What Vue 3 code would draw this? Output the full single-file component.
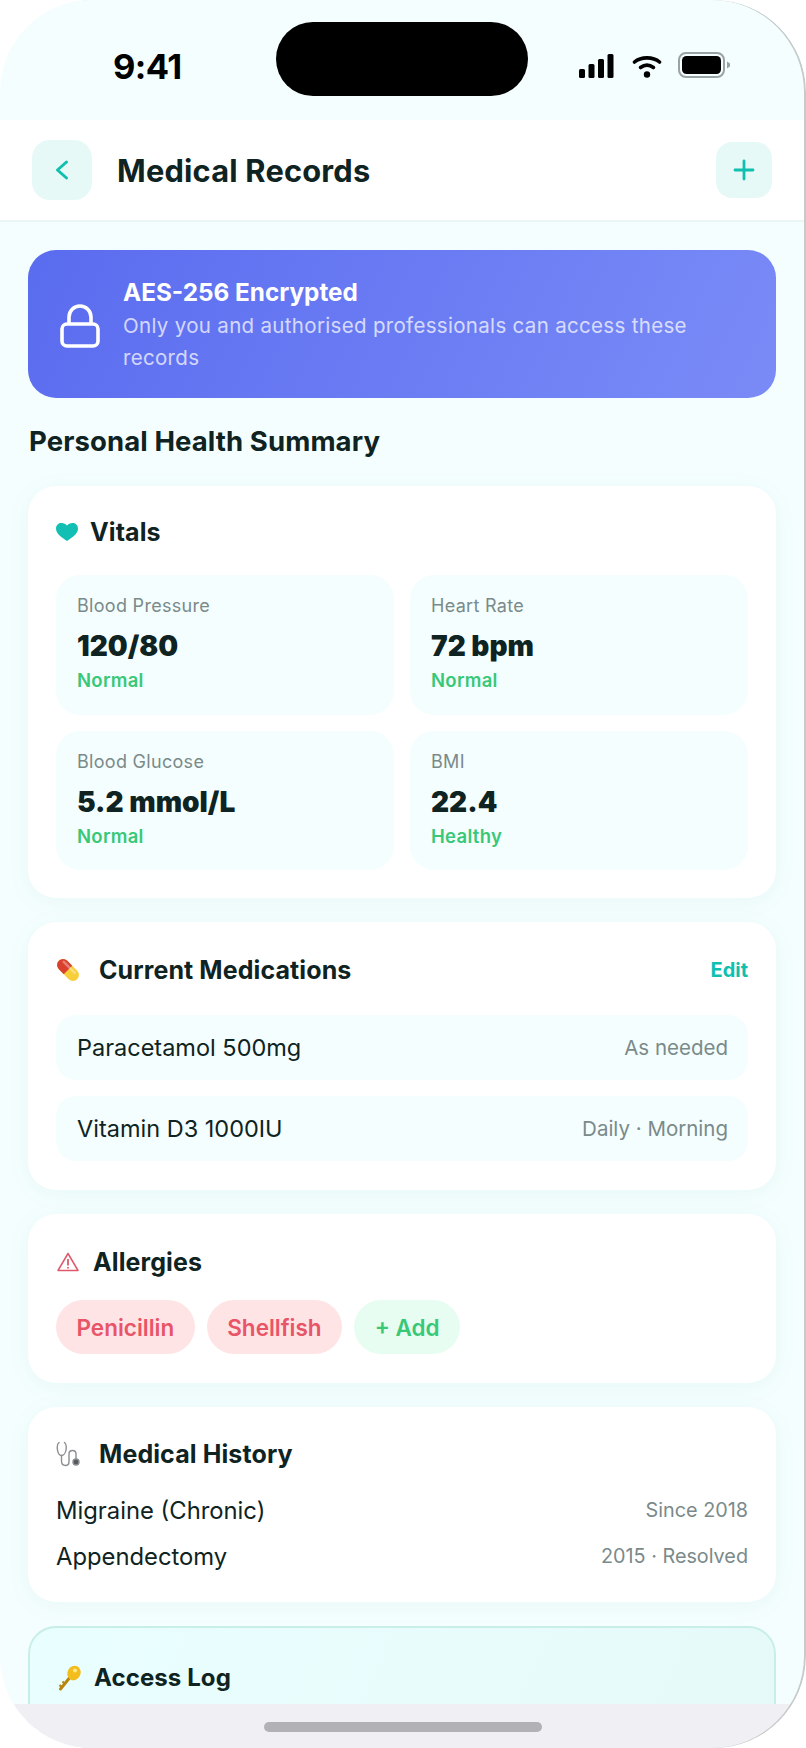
<script setup>
const vitals = [
  { label: 'Blood Pressure', value: '120/80', status: 'Normal' },
  { label: 'Heart Rate', value: '72 bpm', status: 'Normal' },
  { label: 'Blood Glucose', value: '5.2 mmol/L', status: 'Normal' },
  { label: 'BMI', value: '22.4', status: 'Healthy' },
]
const meds = [
  { name: 'Paracetamol 500mg', note: 'As needed' },
  { name: 'Vitamin D3 1000IU', note: 'Daily · Morning' },
]
const history = [
  { name: 'Migraine (Chronic)', note: 'Since 2018' },
  { name: 'Appendectomy', note: '2015 · Resolved' },
]
</script>

<template>
  <div class="phone">
    <div class="status">
      <span class="time">9:41</span>
      <div class="island"></div>
      <div class="status-icons">
        <svg class="signal" width="35" height="24" viewBox="0 0 35 24"><rect x="0" y="15" width="6" height="9" rx="1.5"/><rect x="9.500" y="10" width="6" height="14" rx="1.5"/><rect x="19" y="5" width="6" height="19" rx="1.5"/><rect x="28.500" y="0" width="6" height="24" rx="1.5"/></svg>
        <svg width="30" height="24" viewBox="0 0 30 24" fill="none" stroke="#000" stroke-width="3.600" stroke-linecap="round"><path d="M2.500 8C9 2.500 21 2.500 27.500 8"/><path d="M8.500 13.500c4-3 9-3 13 0"/><circle cx="15" cy="20.500" r="3.200" fill="#000" stroke="none"/></svg>
        <svg width="53" height="26" viewBox="0 0 53 26"><rect x="1" y="1" width="45" height="24" rx="7" fill="none" stroke="#9aa3a3" stroke-width="2"/><rect x="4" y="4" width="39" height="18" rx="4.500" fill="#000"/><path d="M49 9.500l3 2v3l-3 2z" fill="#9aa3a3"/></svg>
      </div>
    </div>

    <header class="topbar">
      <div class="left">
        <button class="back">
          <svg width="16" height="24" viewBox="0 0 16 24" fill="none" stroke="#10bfb0" stroke-width="3" stroke-linecap="round" stroke-linejoin="round"><path d="M12.500 4 3.500 12l9 8"/></svg>
        </button>
        <h1>Medical Records</h1>
      </div>
      <button class="plus">
        <svg width="22" height="22" viewBox="0 0 22 22" fill="none" stroke="#10bfb0" stroke-width="2.800" stroke-linecap="round"><path d="M11 2v18M2 11h18"/></svg>
      </button>
    </header>

    <main class="content">
      <section class="banner">
        <svg class="lock" width="40" height="44" viewBox="0 0 40 44" fill="none" stroke="#fff" stroke-width="3.600" stroke-linejoin="round"><rect x="2" y="20" width="36" height="22" rx="5"/><path d="M9 20v-7a11 11 0 0 1 22 0v7"/></svg>
        <div>
          <div class="banner-title">AES-256 Encrypted</div>
          <div class="banner-text">Only you and authorised professionals can access these records</div>
        </div>
      </section>

      <h2 class="section">Personal Health Summary</h2>

      <section class="card vitals">
        <div class="head gap-heart">
          <svg width="22" height="18" viewBox="0 0 22 18"><path d="M11 18C6 14.500 0 11 0 5.500 0 2 2.600 0 5.500 0 7.800 0 9.800 1 11 2.600 12.200 1 14.200 0 16.500 0 19.400 0 22 2 22 5.500 22 11 16 14.500 11 18z" fill="#12bfb2"/></svg>
          <h3>Vitals</h3>
        </div>
        <div class="grid">
          <div v-for="v in vitals" :key="v.label" class="tile">
            <div class="t-label">{{ v.label }}</div>
            <div class="t-value">{{ v.value }}</div>
            <div class="t-status">{{ v.status }}</div>
          </div>
        </div>
      </section>

      <section class="card meds">
        <div class="head between">
          <div class="head gap-pill">
            <svg width="24" height="24" viewBox="0 0 24 24"><g transform="rotate(45 12 12)"><rect x="-1" y="6" width="26" height="12" rx="6" fill="#f6cf3b"/><path d="M12 6H5a6 6 0 0 0 0 12h7z" fill="#d9412e"/><rect x="2" y="8" width="18" height="2.500" rx="1.200" fill="#fff" opacity=".35"/></g></svg>
            <h3>Current Medications</h3>
          </div>
          <span class="edit">Edit</span>
        </div>
        <div class="med-list">
          <div v-for="m in meds" :key="m.name" class="med">
            <span class="m-name">{{ m.name }}</span>
            <span class="m-note">{{ m.note }}</span>
          </div>
        </div>
      </section>

      <section class="card allergies">
        <div class="head gap-warn">
          <svg width="24" height="20" viewBox="0 0 24 20" fill="none" stroke="#dd5a6c" stroke-width="1.500" stroke-linejoin="round"><path d="M12 1.500 2 18.500h20z"/><path d="M12 7v6.500M12 15v1.500" stroke-width="1.800"/></svg>
          <h3>Allergies</h3>
        </div>
        <div class="pills">
          <span class="pill red">Penicillin</span>
          <span class="pill red">Shellfish</span>
          <span class="pill green">+ Add</span>
        </div>
      </section>

      <section class="card history">
        <div class="head gap-pill">
          <svg width="24" height="26" viewBox="0 0 24 26" fill="none" stroke="#8b8f92" stroke-width="1.400" stroke-linecap="round"><path d="M3 1.500C1 3 1 6 1.500 9c.5 3 2 5.500 4 5.500S9.500 12 10 9c.5-3 .5-6-1.500-7.500"/><path d="M5.500 14.500V20c0 3 2 4.500 4 4.500s3.500-1.500 3.500-4V13c0-2 1.500-3.500 3.500-3.500S20 11 20 13v6"/><circle cx="20" cy="21" r="3" fill="#55595c" stroke="#8b8f92"/></svg>
          <h3>Medical History</h3>
        </div>
        <div class="hist-list">
          <div v-for="h in history" :key="h.name" class="hist">
            <span class="h-name">{{ h.name }}</span>
            <span class="h-note">{{ h.note }}</span>
          </div>
        </div>
      </section>

      <section class="card log">
        <div class="head gap-key">
          <svg width="24" height="26" viewBox="0 0 24 26"><path d="M2.500 24 13 11" stroke="#b8860f" stroke-width="3" fill="none" stroke-linecap="round"/><path d="M3.500 22l-2-2M6.500 18.500 4.500 16.500" stroke="#b8860f" stroke-width="2" fill="none"/><ellipse cx="16" cy="8" rx="6.500" ry="7.500" transform="rotate(25 16 8)" fill="#f2bd1d"/><circle cx="17" cy="5.500" r="2" fill="#ffe98a"/></svg>
          <h3 class="log-title">Access Log</h3>
        </div>
      </section>
    </main>

    <div class="homebar"><span></span></div>
    <div class="edge"></div>
  </div>
</template>

<style>
html, body { margin: 0; background: #fff; }
</style>

<style scoped>
* { box-sizing: border-box; }
.phone {
  position: relative;
  width: 806px;
  height: 1748px;
  overflow: hidden;
  border-radius: 92px;
  background: #f4fefe;
  font-family: Inter, "Liberation Sans", sans-serif;
  color: #0f2322;
}
.edge {
  position: absolute;
  inset: 0;
  border-radius: inherit;
  box-shadow: inset -2px 0 0 #c6caca;
  pointer-events: none;
}
.status {
  position: relative;
  height: 120px;
  display: flex;
  justify-content: space-between;
  padding: 50px 75px 0 113px;
}
.time { font-size: 34.500px; line-height: 34px; font-weight: 700; color: #000; letter-spacing: -.6px; }
.island { position: absolute; left: 276px; top: 22px; width: 252px; height: 74px; border-radius: 37px; background: #000; }
.status-icons { display: flex; gap: 16px; align-items: flex-end; height: 28px; }
.signal { margin-right: 2px; }
.topbar {
  height: 102px;
  background: #fff;
  border-bottom: 2px solid #ebf5f4;
  display: flex;
  align-items: center;
  justify-content: space-between;
  padding: 0 34px 0 32px;
}
.left { display: flex; align-items: center; gap: 25px; }
button { border: 0; padding: 0; display: flex; align-items: center; justify-content: center; background: #e6f9f6; }
.back { width: 60px; height: 60px; border-radius: 18px; }
.plus { width: 56px; height: 56px; border-radius: 16px; }
h1 { margin: 0; font-size: 30.800px; font-weight: 700; letter-spacing: .2px; color: #0f2322; }
.content { padding: 28px 30px 0 28px; display: flex; flex-direction: column; }
.banner {
  height: 148px;
  border-radius: 28px;
  background: linear-gradient(115deg, #5a6cef, #7a8bf7);
  display: flex;
  align-items: center;
  gap: 23px;
  padding: 0 32px;
  color: #fff;
}
.lock { flex: none; margin-top: 4px; }
.banner-title { font-size: 24.300px; font-weight: 700; line-height: 32px; margin: 1px 0 2px; }
.banner-text { font-size: 20.500px; line-height: 32px; opacity: .72; letter-spacing: .32px; }
.section { margin: 25px 0 27px 1px; font-size: 27.500px; line-height: 36px; font-weight: 700; letter-spacing: .1px; color: #0f2322; }
.card {
  background: #fff;
  border-radius: 28px;
  padding: 28px;
  margin-bottom: 24px;
  box-shadow: 0 4px 24px rgba(16, 130, 120, .05);
}
.head { display: flex; align-items: center; }
.between { justify-content: space-between; }
.gap-heart { gap: 12px; }
.gap-pill { gap: 19px; }
.gap-warn { gap: 13px; }
.gap-key { gap: 12px; }
h3 { margin: 0; font-size: 25px; line-height: 36px; font-weight: 700; letter-spacing: .1px; color: #0f2322; }
.log-title { font-size: 24px; }
.grid { display: grid; grid-template-columns: 1fr 1fr; gap: 16px; margin-top: 25px; }
.tile { height: 139.500px; background: #f4fefe; border-radius: 24px; padding: 18px 21px; }
.t-label { font-size: 18px; line-height: 25px; color: #7a8a8a; letter-spacing: .3px; }
.t-value { font-size: 28px; line-height: 41px; font-weight: 900; color: #0f2322; margin-top: 8px; }
.t-status { font-size: 18.500px; line-height: 26px; font-weight: 600; color: #38c878; letter-spacing: .3px; }
.edit { font-size: 20px; font-weight: 700; color: #10bfb0; }
.meds { padding: 30px 28px 29px; }
.med-list { display: flex; flex-direction: column; gap: 16px; margin-top: 27px; }
.med { height: 65px; background: #f4fefe; border-radius: 20px; display: flex; align-items: center; justify-content: space-between; padding: 0 20px 0 21px; }
.m-name { font-size: 23.500px; font-weight: 400; }
.m-note { font-size: 20.500px; color: #7a8a8a; }
.allergies { padding: 30px 28px 29px; }
.pills { display: flex; gap: 12px; margin-top: 20px; }
.pill { height: 54px; border-radius: 27px; display: flex; align-items: center; padding: 0 20.500px; font-size: 22.500px; font-weight: 600; }
.red { background: #ffe4e6; color: #e85567; }
.green { background: #e8fdf1; color: #38c878; }
.history { padding: 29px 28px 26px; }
.hist-list { margin-top: 18px; display: flex; flex-direction: column; gap: 6px; }
.hist { height: 40px; display: flex; align-items: center; justify-content: space-between; }
.h-name { font-size: 23.800px; }
.h-note { font-size: 19.800px; color: #7a8a8a; }
.log { background: linear-gradient(115deg, #e9fefe, #e5faf8); border: 2px solid #c8eee8; height: 200px; padding: 32px 28px; box-shadow: none; }
.homebar {
  position: absolute;
  left: 0; right: 0; bottom: 0;
  height: 44px;
  background: #f0eff4;
  display: flex;
  justify-content: center;
  padding-top: 18px;
}
.homebar span { width: 278px; height: 10px; border-radius: 5px; background: #b2b1b6; }
</style>
